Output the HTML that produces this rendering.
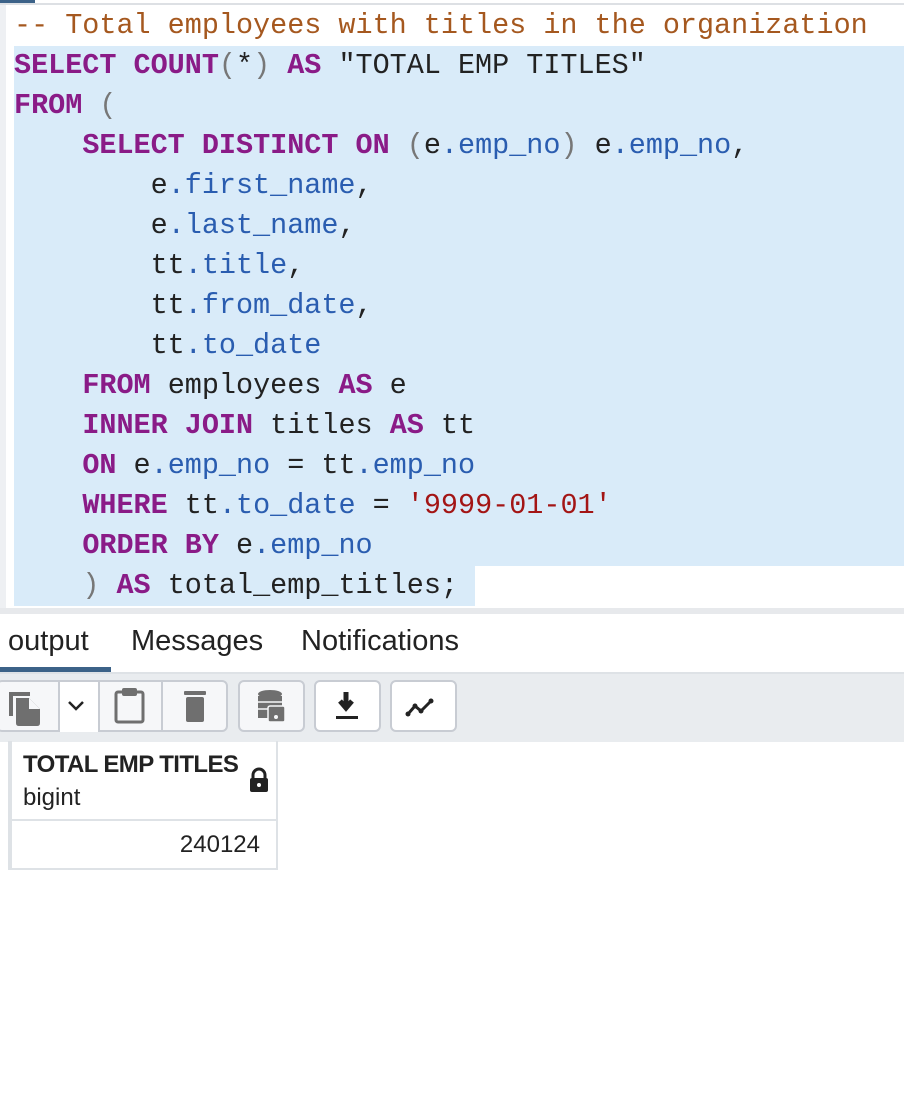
<!DOCTYPE html>
<html><head><style>
body{margin:0;width:904px;height:1116px;background:#fff;position:relative;overflow:hidden;font-family:"Liberation Sans",sans-serif}
.topline{position:absolute;left:0;top:3px;width:904px;height:2px;background:#dde0e4}
.toptab{position:absolute;left:0;top:0;width:35px;height:4px;background:#3c6288}
.gutter{position:absolute;left:0;top:5px;width:6px;height:605px;background:#eef0f3}
.code{position:absolute;left:14px;top:6px;font-family:"Liberation Mono",monospace;font-size:28.46px;line-height:40px;color:#222;white-space:pre}
.sel{position:absolute;background:#d9ebf9}
.k{color:#8a1b87;font-weight:bold}.b{color:#2a5db0}.c{color:#a5581f}.s{color:#a31515}.p{color:#777}
.sep{position:absolute;left:0;top:608px;width:904px;height:6px;background:#e7e9ec}
.tabs{position:absolute;top:625px;font-size:29px;color:#222}
.ul{position:absolute;left:0;top:667px;width:111px;height:5px;background:#3c6288}
.tb{position:absolute;left:0;top:672px;width:904px;height:68px;background:#e9ecef;border-top:2px solid #dee2e6}
.btn{position:absolute;top:680px;height:52px;border:2px solid #c8ccd3;border-radius:6px;background:#f6f7f9;box-sizing:border-box}
.th{position:absolute;left:10px;top:741px;width:268px;height:80px;border:2px solid #dee2e6;box-sizing:border-box;border-top:none}
.td{position:absolute;left:10px;top:819px;width:268px;height:51px;border:2px solid #dee2e6;box-sizing:border-box}
</style></head><body>
<div class="toptab"></div><div class="topline"></div><div class="gutter"></div>
<div class="sel" style="left:14px;top:46px;width:890px;height:520px"></div>
<div class="sel" style="left:14px;top:566px;width:461px;height:40px"></div>
<div class="code"><span class="c">-- Total employees with titles in the organization</span>
<span class="k">SELECT</span> <span class="k">COUNT</span><span class="p">(</span>*<span class="p">)</span> <span class="k">AS</span> "TOTAL EMP TITLES"
<span class="k">FROM</span> <span class="p">(</span>
    <span class="k">SELECT</span> <span class="k">DISTINCT</span> <span class="k">ON</span> <span class="p">(</span>e<span class="b">.emp_no</span><span class="p">)</span> e<span class="b">.emp_no</span>,
        e<span class="b">.first_name</span>,
        e<span class="b">.last_name</span>,
        tt<span class="b">.title</span>,
        tt<span class="b">.from_date</span>,
        tt<span class="b">.to_date</span>
    <span class="k">FROM</span> employees <span class="k">AS</span> e
    <span class="k">INNER</span> <span class="k">JOIN</span> titles <span class="k">AS</span> tt
    <span class="k">ON</span> e<span class="b">.emp_no</span> = tt<span class="b">.emp_no</span>
    <span class="k">WHERE</span> tt<span class="b">.to_date</span> = <span class="s">'9999-01-01'</span>
    <span class="k">ORDER</span> <span class="k">BY</span> e<span class="b">.emp_no</span>
    <span class="p">)</span> <span class="k">AS</span> total_emp_titles;</div>
<div class="sep"></div>
<div class="tabs" style="left:8px">output</div>
<div class="tabs" style="left:131px">Messages</div>
<div class="tabs" style="left:301px">Notifications</div>
<div class="ul"></div>
<div class="tb"></div>
<div class="btn" style="left:-4px;width:232px"></div>
<div style="position:absolute;left:58px;top:682px;width:38px;height:50px;background:#fff;border-left:2px solid #c8ccd3;border-right:2px solid #c8ccd3"></div>
<div style="position:absolute;left:161px;top:682px;width:2px;height:48px;background:#c8ccd3"></div>
<div class="btn" style="left:238px;width:67px"></div>
<div class="btn" style="left:314px;width:67px;background:#fff"></div>
<div class="btn" style="left:390px;width:67px;background:#fff"></div>
<svg style="position:absolute;left:0;top:680px" width="460" height="54">
<path d="M11 36V14h19" stroke="#6f6f6f" stroke-width="4" fill="none"/>
<path d="M16 18h13l11 11v14q0 3-3 3H19q-3 0-3-3z" fill="#6f6f6f"/>
<path d="M29 18v11h11z" fill="#f6f7f9"/>
<path d="M69 22l7 7 7-7" stroke="#222" stroke-width="2.5" fill="none"/>
<rect x="116" y="12" width="27" height="30" rx="2" fill="none" stroke="#6f6f6f" stroke-width="3"/>
<rect x="122" y="8" width="15" height="8" rx="2" fill="#6f6f6f"/>
<rect x="184" y="11" width="22" height="4" rx="1" fill="#6f6f6f"/>
<rect x="186" y="17" width="18" height="25" rx="2" fill="#6f6f6f"/>
<ellipse cx="270" cy="14" rx="12" ry="4" fill="#6f6f6f"/>
<rect x="258" y="16" width="24" height="22" fill="#6f6f6f"/>
<path d="M258 22h24M258 29h24" stroke="#f6f7f9" stroke-width="1.5"/>
<rect x="268" y="26" width="17" height="16" rx="2" fill="#6f6f6f" stroke="#f6f7f9" stroke-width="1.5"/>
<circle cx="276" cy="37" r="2" fill="#f6f7f9"/>
<path d="M346 12v14M340 21l6 7 6-7" stroke="#222" stroke-width="5" fill="none"/>
<rect x="336" y="36" width="22" height="3" fill="#222"/>
<path d="M408 34l7-8 6 5 10-10" stroke="#222" stroke-width="3" fill="none"/>
<circle cx="408" cy="34" r="2.5" fill="#222"/><circle cx="415" cy="26" r="2.5" fill="#222"/><circle cx="421" cy="31" r="2.5" fill="#222"/><circle cx="431" cy="21" r="2.5" fill="#222"/>
</svg>
<div class="th"></div><div class="td"></div>
<div style="position:absolute;left:0;top:741px;width:10px;height:129px;border-right:2px solid #dee2e6;box-sizing:border-box"></div>
<div style="position:absolute;left:23px;top:751px;font-size:24px;font-weight:bold;color:#222;letter-spacing:-0.6px">TOTAL EMP TITLES</div>
<div style="position:absolute;left:23px;top:784px;font-size:24px;color:#222">bigint</div>
<svg style="position:absolute;left:248px;top:767px" width="22" height="26"><path d="M5 11V8a6 6 0 0 1 12 0v3" stroke="#222" stroke-width="3" fill="none"/><rect x="2" y="11" width="18" height="14" rx="2" fill="#222"/><circle cx="11" cy="18" r="2" fill="#fff"/></svg>
<div style="position:absolute;right:644px;top:831px;font-size:24px;color:#222">240124</div>
</body></html>
